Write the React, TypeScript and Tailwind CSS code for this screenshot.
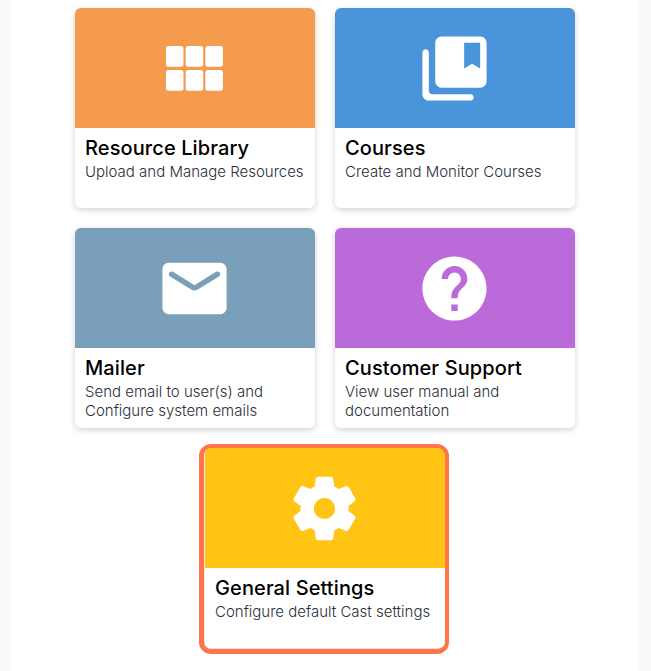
import type { ReactNode } from "react";

type Tile = {
  title: string;
  lines: string[];
  color: string;
  icon: ReactNode;
  active?: boolean;
};

const TILES: Tile[] = [
  {
    title: "Resource Library",
    lines: ["Upload and Manage Resources"],
    color: "bg-[#f59b4d]",
    icon: (
      <svg width="57" height="45" viewBox="0 0 57 45" fill="white">
        <rect x="0" y="0" width="17.5" height="20.7" rx="2.5" />
        <rect x="19.7" y="0" width="17.5" height="20.7" rx="2.5" />
        <rect x="39.4" y="0" width="17.5" height="20.7" rx="2.5" />
        <rect x="0" y="24" width="17.5" height="20.7" rx="2.5" />
        <rect x="19.7" y="24" width="17.5" height="20.7" rx="2.5" />
        <rect x="39.4" y="24" width="17.5" height="20.7" rx="2.5" />
      </svg>
    ),
  },
  {
    title: "Courses",
    lines: ["Create and Monitor Courses"],
    color: "bg-[#4a94dc]",
    icon: (
      <svg width="77" height="77" viewBox="0 0 24 24" fill="white">
        <path d="M3 6c-.55 0-1 .45-1 1v13c0 1.1.9 2 2 2h13c.55 0 1-.45 1-1s-.45-1-1-1H5c-.55 0-1-.45-1-1V7c0-.55-.45-1-1-1z" />
        <path d="M20 2H8c-1.1 0-2 .9-2 2v12c0 1.1.9 2 2 2h12c1.1 0 2-.9 2-2V4c0-1.1-.9-2-2-2zm0 10-2.5-1.5L15 12V4h5v8z" />
      </svg>
    ),
  },
  {
    title: "Mailer",
    lines: ["Send email to user(s) and", "Configure system emails"],
    color: "bg-[#7a9fbb]",
    icon: (
      <svg width="77" height="77" viewBox="0 0 24 24" fill="white">
        <path d="M20 4H4c-1.1 0-1.99.9-1.99 2L2 18c0 1.1.9 2 2 2h16c1.1 0 2-.9 2-2V6c0-1.1-.9-2-2-2zm-.4 4.25-6.54 4.09c-.65.41-1.47.41-2.12 0L4.4 8.25c-.25-.16-.4-.43-.4-.72 0-.67.73-1.07 1.3-.72L12 11l6.7-4.19c.57-.35 1.3.05 1.3.72 0 .29-.15.56-.4.72z" />
      </svg>
    ),
  },
  {
    title: "Customer Support",
    lines: ["View user manual and", "documentation"],
    color: "bg-[#ba6bd9]",
    icon: (
      <svg width="77" height="77" viewBox="0 0 24 24" fill="white">
        <path d="M12 2C6.48 2 2 6.48 2 12s4.48 10 10 10 10-4.48 10-10S17.52 2 12 2zm1 17h-2v-2h2v2zm2.07-7.75l-.9.92C13.45 12.9 13 13.5 13 15h-2v-.5c0-1.1.45-2.1 1.17-2.83l1.24-1.26c.37-.36.59-.86.59-1.41 0-1.1-.9-2-2-2s-2 .9-2 2H8c0-2.21 1.79-4 4-4s4 1.79 4 4c0 .88-.36 1.68-.93 2.25z" />
      </svg>
    ),
  },
  {
    title: "General Settings",
    lines: ["Configure default Cast settings"],
    color: "bg-[#ffc414]",
    active: true,
    icon: (
      <svg width="77" height="77" viewBox="0 0 24 24" fill="white">
        <g transform="translate(12 12) scale(.95) translate(-12 -12)">
          <path
            stroke="white"
            strokeWidth="0.8"
            strokeLinejoin="round"
            d="M19.43,12.97C19.47,12.65 19.5,12.33 19.5,12C19.5,11.67 19.47,11.34 19.43,11L21.54,9.37C21.73,9.22 21.78,8.95 21.66,8.73L19.66,5.27C19.54,5.05 19.27,4.96 19.05,5.05L16.56,6.05C16.04,5.66 15.5,5.32 14.87,5.07L14.5,2.42C14.46,2.18 14.25,2 14,2H10C9.75,2 9.54,2.18 9.5,2.42L9.13,5.07C8.5,5.32 7.96,5.66 7.44,6.05L4.95,5.05C4.73,4.96 4.46,5.05 4.34,5.27L2.34,8.73C2.21,8.95 2.27,9.22 2.46,9.37L4.57,11C4.53,11.34 4.5,11.67 4.5,12C4.5,12.33 4.53,12.65 4.57,12.97L2.46,14.63C2.27,14.78 2.21,15.05 2.34,15.27L4.34,18.73C4.46,18.95 4.73,19.03 4.95,18.95L7.44,17.94C7.96,18.34 8.5,18.68 9.13,18.93L9.5,21.58C9.54,21.82 9.75,22 10,22H14C14.25,22 14.46,21.82 14.5,21.58L14.87,18.93C15.5,18.67 16.04,18.34 16.56,17.94L19.05,18.95C19.27,19.03 19.54,18.95 19.66,18.73L21.66,15.27C21.78,15.05 21.73,14.78 21.54,14.63L19.43,12.97Z"
          />
        </g>
        <circle cx="12" cy="12" r="3.3" fill="#ffc414" />
      </svg>
    ),
  },
];

function TileCard({ tile }: { tile: Tile }) {
  return (
    <div className="relative w-60 h-50 rounded-md bg-white shadow-[0_2px_6px_rgba(0,0,0,0.18)]">
      <div className={`h-30 flex items-center justify-center rounded-t-md pr-px ${tile.color}`}>{tile.icon}</div>
      <div className="px-2.5 pt-2">
        <h3 className="text-[20px] leading-6 font-medium tracking-[0.1px] text-black">{tile.title}</h3>
        <p className="mt-0.5 text-[15px] leading-[19px] font-light text-[#2a2f3a]">
          {tile.lines.map((line) => (
            <span key={line} className="block whitespace-nowrap">{line}</span>
          ))}
        </p>
      </div>
      {tile.active && (
        <div className="absolute -top-1 -bottom-[6px] -left-1.5 -right-1 rounded-xl border-4 border-b-[5px] border-l-[5px] border-[#ff7549]" />
      )}
    </div>
  );
}

export default function App() {
  return (
    <div className="h-[671px] overflow-hidden bg-[#fafafa] px-3 font-['Inter',sans-serif]">
      <div className="h-full w-[625px] bg-white pt-2 pl-[63px]">
        <div className="flex w-[500px] flex-wrap justify-center gap-5">
          {TILES.map((tile) => (
            <TileCard key={tile.title} tile={tile} />
          ))}
        </div>
      </div>
    </div>
  );
}
